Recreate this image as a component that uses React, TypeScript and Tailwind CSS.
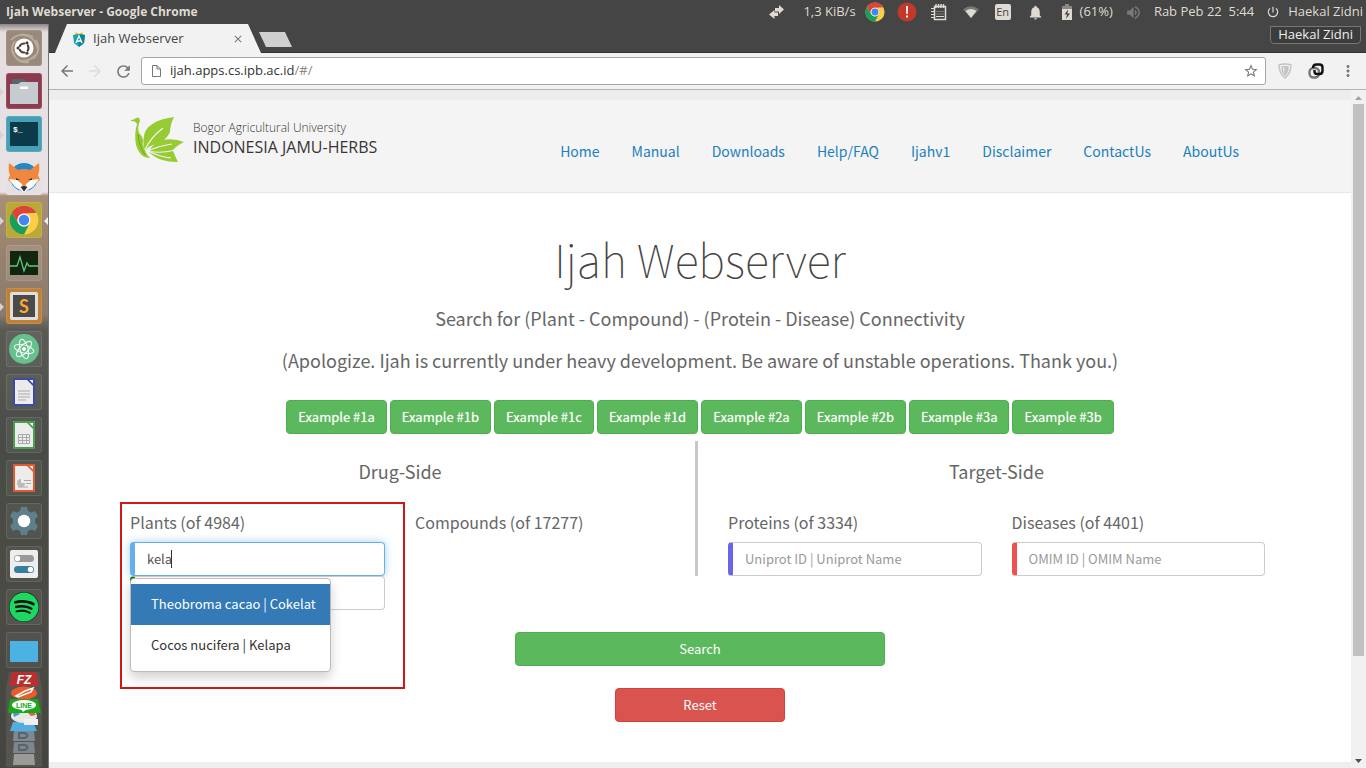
import React, { useState } from 'react';
import { MdArrowBack, MdArrowForward, MdRefresh, MdStarBorder, MdMoreVert, MdNotifications, MdPowerSettingsNew, MdVolumeUp, MdClose } from 'react-icons/md';
import { FaSpotify } from 'react-icons/fa';

const body = "font-['Noto_Sans_CJK_JP',sans-serif]";

function ChromeLogo({ className }: { className: string }) {
  return (
    <svg viewBox="0 0 48 48" className={className} aria-hidden="true">
      <circle cx="24" cy="24" r="23" fill="#fccd48" />
      <path d="M4.1 12.5A23 23 0 0 1 43.9 12.5L24 13.5A10.5 10.5 0 0 0 14.9 29.3Z" fill="#db4437" />
      <path d="M4.1 12.5A23 23 0 0 0 24 47L33.1 29.3A10.5 10.5 0 0 1 14.9 29.3Z" fill="#16a05d" />
      <circle cx="24" cy="24" r="10.5" fill="#f1f1f1" />
      <circle cx="24" cy="24" r="8.3" fill="#4285f4" />
    </svg>
  );
}

function TopBar() {
  return (
    <header className="flex h-6 items-center justify-between bg-[#454545] pl-1.5 pr-[3px] text-[13px] text-[#dfdbd2] font-['Open_Sans',sans-serif]">
      <h1 className="text-[12px] font-bold">Ijah Webserver - Google Chrome</h1>
      <div className="flex items-center">
        <svg viewBox="0 0 15 14" className="mr-[19px] h-3.5 w-[15px]" fill="#dfdbd2" aria-label="Network traffic">
          <path d="M6 3h4V0l5 4.500L10 9V6.500H6zM9 11H5.500v3L0 9.500 5.500 5v2.500H9z" />
        </svg>
        <span className="mr-[9px]">1,3 KiB/s</span>
        <ChromeLogo className="mr-3 size-5" />
        <svg viewBox="0 0 20 20" className="mr-3.5 size-5" aria-label="Warning">
          <circle cx="10" cy="10" r="9.5" fill="#c0392b" />
          <path d="M9 4h2l-.3 8H9.300zM9 13.500h2v2H9z" fill="#fff" />
        </svg>
        <svg viewBox="0 0 16 18" className="mr-4 h-[18px] w-4" fill="none" stroke="#dfdbd2" aria-label="Notes">
          <path d="M3.500 3.500h11v13h-11zM5 1v4M7.500 1v4M10 1v4M12.500 1v4" strokeWidth="1.500" />
          <path d="M0 5.500h4M0 8.500h4M0 11.500h4M0 14.500h4M5 13.500h8" />
          <path d="M5 8.500h8M5 11h8" stroke="#777" />
        </svg>
        <svg viewBox="0 0 16 12" className="mr-4 h-3 w-4" aria-label="Wireless">
          <path d="M0 3.500Q8-3 16 3.500L8 12Z" fill="#777" />
          <path d="M2.500 5Q8 1 13.500 5L8 12Z" fill="#dfdbd2" />
        </svg>
        <span className="mr-4 flex h-4 w-4 items-center justify-center rounded-[2px] bg-[#dfdbd2] text-[11px] text-[#454545]">En</span>
        <MdNotifications className="mr-[18px] size-[17px]" />
        <svg viewBox="0 0 10 16" className="mr-2 h-4 w-[10px]" aria-label="Battery">
          <path d="M3 0h4v2h3v4H0V2h3z" fill="#888" />
          <path d="M0 5h10v11H0z" fill="#dfdbd2" />
          <path d="M6 5.500L2.500 10.500H5L4 15l4-5.500H5.500z" fill="#454545" />
        </svg>
        <span className="mr-3">(61%)</span>
        <MdVolumeUp className="mr-3 size-[17px] text-[#7b7975]" />
        <span className="mr-3 whitespace-pre">Rab Peb 22  5:44</span>
        <MdPowerSettingsNew className="mr-2 size-[14px]" />
        <span>Haekal Zidni</span>
      </div>
    </header>
  );
}

function Doc({ color, children }: { color: string; children: React.ReactNode }) {
  return (
    <svg viewBox="0 0 36 36" className="size-full" fill="none" aria-hidden="true">
      <path d="M8 5h20v26H8z" fill="#ececec" stroke={color} strokeWidth="2" />
      <path d="M19 4h10v10z" fill={color} />
      <path d="M23.500 6h3.500v3.500z" fill="#fff" />
      {children}
    </svg>
  );
}

const launcherItems: { name: string; tile: string; icon: React.ReactNode; left?: boolean; right?: boolean }[] = [
  { name: 'Dash', tile: 'bg-[#9a8878]', icon: (
    <svg viewBox="0 0 36 36" fill="none">
      <path d="M5 10Q14 1 27 7M30 10Q36 20 27 29M23 32Q10 34 6 20M9 27Q3 19 9 11M14 5Q28 4 32 19M29 25Q24 32 14 31" stroke="#b7aa9f" strokeWidth="2" />
      <circle cx="18" cy="18" r="9.500" fill="#fff" />
      <circle cx="18" cy="18" r="4.500" stroke="#4b3c34" strokeWidth="2.200" />
      <path d="M12 18h3M21 23l-2-3M21 13l-2 3" stroke="#fff" strokeWidth="2" />
      <circle cx="12" cy="18" r="1.500" fill="#4b3c34" /><circle cx="21" cy="12.800" r="1.500" fill="#4b3c34" /><circle cx="21" cy="23.200" r="1.500" fill="#4b3c34" />
    </svg>) },
  { name: 'Files', tile: 'bg-[#8b3d4f]', left: true, icon: (
    <svg viewBox="0 0 36 36"><path d="M6 6h12l3 3h9v5H6z" fill="#58666c" /><path d="M4 11h8l3-2h17v22H4z" fill="#c5cbcf" /><path d="M14 13.500h8v2.500h-8z" fill="#fff" /></svg>) },
  { name: 'Terminal', tile: 'bg-[#469fb5]', left: true, icon: (
    <svg viewBox="0 0 36 36"><path d="M4 6h28v24H4z" fill="#0b3a4a" /><text x="7" y="16" fill="#fff" fontSize="8" fontWeight="bold" fontFamily="Liberation Mono">$_</text></svg>) },
  { name: 'Firefox', tile: 'bg-[#e5e0e1]', icon: (
    <svg viewBox="0 0 36 36"><circle cx="18" cy="18" r="14" fill="#2388c8" /><path d="M3 4l9 7q6-2 12 0l9-7q1 8-1 12l2 5-7 5-9 6-9-6-7-5 2-5Q2 12 3 4z" fill="#ef873f" /><path d="M3 20l8 1 5 4 2 8-9-5zM33 20l-8 1-5 4-2 8 9-5z" fill="#fff" /><path d="M14.500 28q3.500-2 7 0L18 32.500z" fill="#333" /><path d="M10 19l4 2-4 0zM26 19l-4 2 4 0z" fill="#333" /></svg>) },
  { name: 'Chrome', tile: 'bg-[#b9aa37]', left: true, right: true, icon: <ChromeLogo className="p-[3px]" /> },
  { name: 'System Monitor', tile: 'bg-white/10', icon: (
    <svg viewBox="0 0 36 36" fill="none"><path d="M4 6h28v24H4z" fill="#12250f" /><path d="M4 21h7l3-9 4 14 3-8 2 3h9" stroke="#62c77c" strokeWidth="1.300" /></svg>) },
  { name: 'Sublime Text', tile: 'bg-[#bd8138]', left: true, icon: (
    <svg viewBox="0 0 36 36"><rect x="4" y="4" width="28" height="28" rx="2" fill="#dedede" /><rect x="7" y="7" width="22" height="22" fill="#4a4a4a" /><text x="18" y="25" textAnchor="middle" fill="#ffa630" fontSize="18" fontWeight="bold" fontFamily="Lato">S</text></svg>) },
  { name: 'Atom', tile: 'bg-white/5', icon: (
    <svg viewBox="0 0 36 36" fill="none" stroke="#fff"><circle cx="18" cy="18" r="15" fill="#66c18c" stroke="none" /><ellipse cx="18" cy="18" rx="10" ry="4" transform="rotate(15 18 18)" /><ellipse cx="18" cy="18" rx="10" ry="4" transform="rotate(75 18 18)" /><ellipse cx="18" cy="18" rx="10" ry="4" transform="rotate(135 18 18)" /><circle cx="18" cy="18" r="1.500" fill="#fff" /></svg>) },
  { name: 'Writer', tile: 'bg-white/5', icon: <Doc color="#3c4aa8"><path d="M12 17h12M12 20h12M12 23h12M12 26h8" stroke="#aaa" /></Doc> },
  { name: 'Calc', tile: 'bg-white/5', icon: <Doc color="#4b9e50"><path d="M12.500 17.500h11v9h-11zM12 20.500h12M12 23.500h12M16.500 17v10M20.500 17v10" stroke="#aaa" /></Doc> },
  { name: 'Impress', tile: 'bg-white/5', icon: <Doc color="#e2592f"><path d="M15 19v4h4a4 4 0 1 1-4-4z" fill="#bbb" /><path d="M18 20.500h7M20 23.500h5M12 27h10" stroke="#aaa" /></Doc> },
  { name: 'System Settings', tile: 'bg-white/5', icon: (
    <svg viewBox="0 0 36 36"><path d="M15 4h6l1 4 3 1.500 4-1.500 3 5-3 3.500v3L32 23l-3 5-4-1.500L22 28l-1 4h-6l-1-4-3-1.500L7 28l-3-5 3-3.500v-3L4 13l3-5 4 1.500L14 8z" fill="#607f8e" /><circle cx="18" cy="18" r="6.200" fill="#fff" /></svg>) },
  { name: 'Tweak Tool', tile: 'bg-white/5', icon: (
    <svg viewBox="0 0 36 36"><rect x="4" y="4" width="28" height="28" rx="2" fill="#eee" /><rect x="8" y="9" width="20" height="7" rx="3.500" fill="#999" /><circle cx="11.500" cy="12.500" r="2.700" fill="#fff" /><rect x="8" y="20" width="20" height="7" rx="3.500" fill="#367f9e" /><circle cx="24.500" cy="23.500" r="2.700" fill="#fff" /></svg>) },
  { name: 'Spotify', tile: 'bg-white/5', icon: <span className="m-[3px] block rounded-full bg-[#111]"><FaSpotify className="size-[30px] text-[#1ed760]" /></span> },
  { name: 'Desktop', tile: 'bg-white/5', icon: <svg viewBox="0 0 36 36"><path d="M4 9h28v21H4z" fill="#4bb2e2" /></svg> },
];

function Launcher() {
  return (
    <nav aria-label="Launcher" className="flex w-[49px] shrink-0 flex-col items-center gap-[7px] border-r border-[#77756f] bg-[linear-gradient(#8c8686_0,#e4dee0_8px,#e9e3e6_168px,#a88f79_172px,#97826f_230px,#8b7a6c_290px,#5a5b56_305px,#494c46_420px,#4b4a44_600px,#44453f_100%)] pt-1.5">
      {launcherItems.map((it) => (
        <button key={it.name} type="button" aria-label={it.name} className={`relative size-9 shrink-0 rounded-[3px] border border-white/10 ${it.tile}`}>
          <span className="absolute -inset-px block">{it.icon}</span>
          {it.left && <svg viewBox="0 0 4 8" className="absolute -left-[7px] top-3.5 h-2 w-1" fill="#d7d2cf"><path d="M0 0l4 4-4 4z" /></svg>}
          {it.right && <svg viewBox="0 0 4 8" className="absolute -right-[7px] top-3.5 h-2 w-1" fill="#eee"><path d="M4 0L0 4l4 4z" /></svg>}
        </button>
      ))}
      <svg viewBox="0 0 36 95" className="-mt-[3px] h-[95px] w-9 shrink-0" aria-label="More applications">
        <path d="M3 0h30l3 15v80H0V15z" fill="#55544e" />
        <path d="M8 82h20l1 11H7z" fill="#9a9a97" />
        <path d="M8 70h20l1 11H7z" fill="#7c868c" /><path d="M8 58h20l1 11H7z" fill="#7c8a93" />
        <path d="M13 61h6q5 2.500 0 5h-6zM13 73h6q5 2.500 0 5h-6z" fill="none" stroke="#56646d" strokeWidth="2" />
        <path d="M7 50h20l4 9H4z" fill="#50aee0" />
        <ellipse cx="18" cy="44" rx="13" ry="7" fill="#e7e7e5" /><path d="M7 41l5-1 2 2-6 3z" fill="#459ac3" /><path d="M22 41l6-1 2 3-5 1z" fill="#dc6246" /><path d="M18 47h14v6H18z" fill="#f0f0f0" />
        <ellipse cx="18" cy="21" rx="13" ry="6.500" fill="#e65c2f" /><path d="M10 24l9-5 8-3-2 4-13 5z" fill="none" stroke="#fff" strokeWidth="1.500" />
        <path d="M4 27h28l3 14H2z" fill="#18a818" /><ellipse cx="18" cy="33" rx="12" ry="5" fill="#fff" /><path d="M15 37h6l-4 3z" fill="#fff" /><text x="18" y="35.500" textAnchor="middle" fontFamily="Liberation Sans" fontSize="7" fontWeight="bold" fill="#18a818">LINE</text>
        <path d="M6 0h24l3 14H3z" fill="#b82f2f" /><text x="18" y="12" textAnchor="middle" fontFamily="Liberation Sans" fontSize="12" fontWeight="bold" fontStyle="italic" fill="#fff">FZ</text>
      </svg>
    </nav>
  );
}

function BrowserChrome() {
  return (
    <div className="font-['Open_Sans',sans-serif]">
      <div className="flex h-[29px] items-start justify-between border-b border-[#333] bg-[#454545]">
        <div className="-mb-px flex">
          <div className="ml-1.5 flex h-[29px] w-[206px] items-center bg-[#f2f2f2] pl-[17px] pr-[17px] text-[13px] text-[#444] [clip-path:polygon(0_100%,12px_0,193px_0,100%_100%)]">
            <svg viewBox="0 0 14 16" className="mr-[7px] h-4 w-3.5" aria-hidden="true">
              <path d="M2 5L4 1l3 2 3-2 2 4z" fill="#f3c63c" />
              <path d="M1 4l6-1 6 1-1 8-5 4-5-4z" fill="#17a2b5" /><path d="M7 3l6 1-1 8-5 4z" fill="#0b8596" />
              <path d="M4 12l3-7 3 7M5 10h4" fill="none" stroke="#fff" strokeWidth="1.300" />
            </svg>
            <span className="grow">Ijah Webserver</span>
            <button type="button" aria-label="Close tab"><MdClose className="size-3 text-[#777]" /></button>
          </div>
          <button type="button" aria-label="New tab" className="-ml-0.5 mt-2 h-[15px] w-[33px] bg-[#cfcfcf] [clip-path:polygon(0_0,26px_0,100%_100%,7px_100%)]" />
        </div>
        <div className="mr-[5px] mt-0.5 flex h-[18px] items-center rounded-b-[4px] border border-[#777] bg-[#3c3c3c] px-[7px] text-[13px] text-[#eee]">Haekal Zidni</div>
      </div>
      <div className="flex h-[37px] items-center border-b border-[#b3b3b3] bg-[#f2f2f2] pl-[9px] pr-[9px] text-[#777]">
        <button type="button" aria-label="Back"><MdArrowBack className="size-[18px]" /></button>
        <button type="button" aria-label="Forward" className="ml-2.5"><MdArrowForward className="size-[18px] text-[#ddd]" /></button>
        <button type="button" aria-label="Reload" className="ml-2.5"><MdRefresh className="size-[19px]" /></button>
        <div className="ml-2 flex h-7 grow items-center rounded-[3px] border border-[#a6a6a6] bg-white pl-2.5 pr-1.5">
          <svg viewBox="0 0 9 12" className="h-3 w-[9px]" fill="none" stroke="#777"><path d="M.5.5H5L8.500 4v7.500h-8zM5 .5V4h3.500" /></svg>
          <p className="ml-[9px] grow text-[13px] text-[#333]">ijah.apps.cs.ipb.ac.id<span className="text-[#888]">/#/</span></p>
          <button type="button" aria-label="Bookmark"><MdStarBorder className="size-4" /></button>
        </div>
        <svg viewBox="0 0 14 16" className="ml-3 h-4 w-3.5" fill="none" stroke="#c4c4c4" strokeWidth="1.500" aria-label="Shield"><path d="M1 2q6-2 12 0 0 8-6 13Q1 10 1 2z" /><path d="M4 4q3-1 6 0 0 5-3 8-3-3-3-8z" /><path d="M7 4h2q0 4-2 6z" fill="#c4c4c4" /></svg>
        <svg viewBox="0 0 16 16" className="ml-4 size-4" fill="none" strokeWidth="2.400" aria-label="Sync"><rect x="1.500" y="5" width="9.500" height="9.500" rx="4" stroke="#777" /><path d="M5 5q0-3.500 3.500-3.500h3q3 0 3 3v3.500q0 3-3 3H9q-2.500 0-2.500-2.500V7" stroke="#111" /></svg>
        <button type="button" aria-label="Menu" className="ml-[15px]"><MdMoreVert className="size-[18px]" /></button>
      </div>
    </div>
  );
}

const links = ['Home', 'Manual', 'Downloads', 'Help/FAQ', 'Ijahv1', 'Disclaimer', 'ContactUs', 'AboutUs'];

function SiteHeader() {
  return (
    <div className="border-b border-[#e7e7e7] border-t-[10px] border-t-[#ededed] bg-[#f4f4f4]">
      <div className="mx-auto flex h-[92px] max-w-[1140px] items-start justify-between pl-px pr-[31px]">
        <a href="#/" className="mt-4 flex text-[#3a3534] font-['Open_Sans',sans-serif]">
          <svg viewBox="0 0 54 46" className="h-[46px] w-[54px]" fill="#97cb33" aria-hidden="true">
            <path d="M0 4Q3 4 5 2Q9 0 9 5Q6 11 8 17Q13 22 12 27Q13 36 19 42Q9 42 5 29Q3 18 6 8Q5 5 0 5Z" />
            <path d="M14 35Q11 24 14 16Q20 4 43 1Q39 9 39 16Q35 25 25 28Q17 30 14 35Z" />
            <path d="M18 35Q23 26 32 24Q43 22 53 26Q45 30 42 34Q31 37 18 35Z" />
            <path d="M18 36Q32 38 42 35Q44 40 47 46Q27 46 18 36Z" />
            <path d="M14 34Q19 22 32 12M17 35Q27 30 41 28M19 36Q30 41 40 42" fill="none" stroke="#f4f4f4" strokeWidth="1.200" />
            <path d="M7 18Q8 30 14 39" fill="none" stroke="#6fa51d" />
          </svg>
          <span className="ml-2 mt-[3px] flex flex-col">
            <span className="text-[12px] font-light leading-[18px]">Bogor Agricultural University</span>
            <span className="text-[16px] leading-[20px]">INDONESIA JAMU-HERBS</span>
          </span>
        </a>
        <nav className="mt-[39px] flex gap-8 text-[14px] leading-6 text-[#1b80bd]">
          {links.map((l) => <a key={l} href={`#/${l.toLowerCase()}`}>{l}</a>)}
        </nav>
      </div>
    </div>
  );
}

const field = 'block h-[34px] w-full rounded-[4px] border border-l-[5px] bg-white px-3 pb-0.5 text-[13px] text-[#555] outline-none placeholder:text-[#999]';
const labelCls = 'mb-2 block text-[16px] leading-6';

function Scrollbar() {
  return (
    <div aria-hidden="true" className="flex w-[15px] shrink-0 flex-col items-center bg-[#f1f1f1]">
      <svg viewBox="0 0 15 14" className="h-3.5 w-full" fill="#a3a3a3"><path d="M4 10l3.500-4 3.500 4z" /></svg>
      <div className="w-[11px] grow-[552] bg-[#c1c1c1]" />
      <div className="grow-[98]" />
      <svg viewBox="0 0 15 14" className="h-3.5 w-full" fill="#505050"><path d="M4 5l3.500 4L11 5z" /></svg>
    </div>
  );
}

export default function App() {
  const [plant, setPlant] = useState('kela');
  return (
    <div className="flex min-h-screen flex-col">
      <TopBar />
      <div className="flex grow">
        <Launcher />
        <div className="flex min-w-0 grow flex-col">
          <BrowserChrome />
          <div className={`flex grow bg-white ${body}`}>
            <div className="flex min-w-0 grow flex-col text-[#666]">
              <SiteHeader />
              <main className="mx-auto w-full max-w-[1140px] grow">
                <div className="text-center">
                  <h2 className="mt-[34px] text-[45px] font-thin leading-[64px] text-[#444]">Ijah Webserver</h2>
                  <p className="mt-[13px] text-[18px] leading-7">Search for (Plant - Compound) - (Protein - Disease) Connectivity</p>
                  <p className="mt-3.5 text-[18px] leading-7">(Apologize. Ijah is currently under heavy development. Be aware of unstable operations. Thank you.)</p>
                  <div className="mt-[26px] flex justify-center gap-[3px]">
                    {['1a', '1b', '1c', '1d', '2a', '2b', '3a', '3b'].map((n) => (
                      <button key={n} type="button" className="h-[34px] rounded-[4px] border border-[#4cae4c] bg-[#5cb85c] px-[11px] text-[13px] text-white [text-shadow:0_0_1px_rgba(255,255,255,0.5)]">Example #{n}</button>
                    ))}
                  </div>
                </div>
                <div className="mt-[7px] flex pr-[5px]">
                  <section className="min-w-0 flex-[540]">
                    <h3 className="mt-4 text-center text-[18px] leading-7">Drug-Side</h3>
                    <div className="mt-[17px] grid grid-cols-2 gap-3">
                      <div className="-ml-2.5 h-[187px] w-[285px] border-2 border-[#d01818] pl-2 pr-[18px] pt-1.5">
                        <label htmlFor="plant" className={labelCls}>Plants (of 4984)</label>
                        <div className="relative">
                          <input id="plant" autoComplete="off" value={plant} onChange={(e) => setPlant(e.target.value)} className={`${field} border-[#66afe9] shadow-[0_0_8px_rgba(102,175,233,0.6)]`} />
                          <span aria-hidden="true" className="absolute left-[41px] top-2 h-[18px] w-px bg-[#333]" />
                        </div>
                        <div className="relative">
                          <input aria-label="Another plant" className={`${field} border-y-[#ccc] border-r-[#ccc] border-l-[green]`} />
                          <ul role="listbox" className="absolute left-0 top-0.5 w-[201px] rounded-[4px] border border-[#bbb] bg-white pb-[5px] pt-[5px] text-[13px] text-[#333] shadow-[0_6px_12px_rgba(0,0,0,0.18)]">
                            <li role="option" aria-selected="true" className="flex h-[41px] items-center bg-[#337ab7] pb-0.5 pl-5 text-white">Theobroma cacao | Cokelat</li>
                            <li role="option" aria-selected="false" className="flex h-[41px] items-center pb-0.5 pl-5">Cocos nucifera | Kelapa</li>
                          </ul>
                        </div>
                      </div>
                      <div className="pl-[9px] pt-2"><span className={labelCls}>Compounds (of 17277)</span></div>
                    </div>
                  </section>
                  <div className="ml-[25px] mr-[30px] h-[135px] w-[3px] shrink-0 bg-[#c8c8c8]" />
                  <section className="min-w-0 flex-[537]">
                    <h3 className="mt-4 text-center text-[18px] leading-7">Target-Side</h3>
                    <div className="mt-[17px] grid grid-cols-2 gap-[30px] pt-2">
                      <div>
                        <label htmlFor="protein" className={labelCls}>Proteins (of 3334)</label>
                        <input id="protein" placeholder="Uniprot ID | Uniprot Name" className={`${field} border-y-[#ccc] border-r-[#ccc] border-l-[#6c63e8]`} />
                      </div>
                      <div>
                        <label htmlFor="disease" className={labelCls}>Diseases (of 4401)</label>
                        <input id="disease" placeholder="OMIM ID | OMIM Name" className={`${field} border-y-[#ccc] border-r-[#ccc] border-l-[#f05050]`} />
                      </div>
                    </div>
                  </section>
                </div>
                <div className="-mt-[57px] flex flex-col items-center gap-[22px] text-[13px] text-white">
                  <button type="button" className="h-[34px] w-[370px] rounded-[4px] border border-[#4cae4c] bg-[#5cb85c]">Search</button>
                  <button type="button" className="h-[34px] w-[170px] rounded-[4px] border border-[#d43f3a] bg-[#d9534f]">Reset</button>
                </div>
              </main>
              <footer className="h-1.5 bg-[#eee]" />
            </div>
            <Scrollbar />
          </div>
        </div>
      </div>
    </div>
  );
}
